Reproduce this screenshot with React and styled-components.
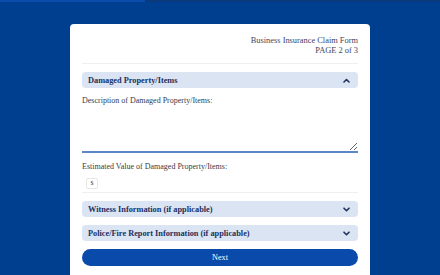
import React, { useState } from "react";
import styled, { createGlobalStyle } from "styled-components";

const Global = createGlobalStyle`
  html, body { margin: 0; padding: 0; }
  body {
    background: #003e90;
    font-family: "Liberation Serif", "Times New Roman", serif;
    height: 275px;
    overflow: hidden;
  }
`;

const Progress = styled.div`
  height: 2px;
  background: #0b3a7c;
`;

const ProgressFill = styled.div`
  height: 100%;
  background: #0a4cac;
`;

const Card = styled.div`
  width: 276px;
  margin: 22px auto 0;
  padding: 12px 12px 20px;
  background: #ffffff;
  border-radius: 4px;
`;

const Header = styled.div`
  text-align: right;
  font-size: 8.4px;
  line-height: 10px;
  color: #3d4461;
  padding-bottom: 7px;
  border-bottom: 1px solid #eeeeee;
  margin-bottom: 8px;
`;

const Sections = styled.div`
  display: flex;
  flex-direction: column;
  gap: 8px;
`;

const AccHeader = styled.button`
  display: flex;
  align-items: center;
  justify-content: space-between;
  height: 16px;
  width: 100%;
  padding: 0 8px 0 6px;
  border: none;
  border-radius: 4px;
  background: #dae4f2;
  color: #22315e;
  font-family: inherit;
  font-size: 8.3px;
  font-weight: 700;
  cursor: pointer;
`;

const Panel = styled.div`
  padding-top: 8px;
  border-bottom: 1px solid #eeeeee;
  padding-bottom: 3px;
`;

const Label = styled.div`
  font-size: 8px;
  line-height: 9px;
  color: #363b48;
`;

const TextArea = styled.textarea`
  display: block;
  box-sizing: border-box;
  width: 100%;
  height: 45px;
  margin: 3px 0 9px;
  border: none;
  border-bottom: 2px solid #5b85c8;
  background: #ffffff;
  font-family: inherit;
  font-size: 8px;
  outline: none;
`;

const Currency = styled.div`
  display: inline-flex;
  align-items: center;
  justify-content: center;
  width: 10px;
  height: 9px;
  margin: 5px 0 0 4px;
  border: 1px solid #e6e6e6;
  border-radius: 2px;
  font-size: 6px;
  color: #444;
`;

const NextButton = styled.button`
  width: 100%;
  height: 17px;
  border: none;
  border-radius: 9px;
  background: #0a4aab;
  color: #ffffff;
  font-family: inherit;
  font-size: 8.2px;
  cursor: pointer;
`;

const Chevron = ({ up }) => (
  <svg width="7" height="5" viewBox="0 0 7 5">
    <polyline
      points={up ? "1,4 3.5,1.5 6,4" : "1,1.2 3.5,3.7 6,1.2"}
      fill="none"
      stroke="#22315e"
      strokeWidth="1.6"
      strokeLinecap="round"
      strokeLinejoin="round"
    />
  </svg>
);

export default function App() {
  const [open] = useState(0);
  const sections = [
    "Damaged Property/Items",
    "Witness Information (if applicable)",
    "Police/Fire Report Information (if applicable)",
  ];
  return (
    <>
      <Global />
      <Progress>
        <ProgressFill style={{ width: "33%" }} />
      </Progress>
      <Card>
        <Header>
          Business Insurance Claim Form
          <br />
          PAGE 2 of 3
        </Header>
        <Sections>
          {sections.map((s, i) => (
            <div key={s}>
              <AccHeader>
                <span>{s}</span>
                <Chevron up={i === open} />
              </AccHeader>
              {i === open && (
                <Panel>
                  <Label>Description of Damaged Property/Items:</Label>
                  <TextArea />
                  <Label>Estimated Value of Damaged Property/Items:</Label>
                  <Currency>$</Currency>
                </Panel>
              )}
            </div>
          ))}
          <NextButton>Next</NextButton>
        </Sections>
      </Card>
    </>
  );
}
